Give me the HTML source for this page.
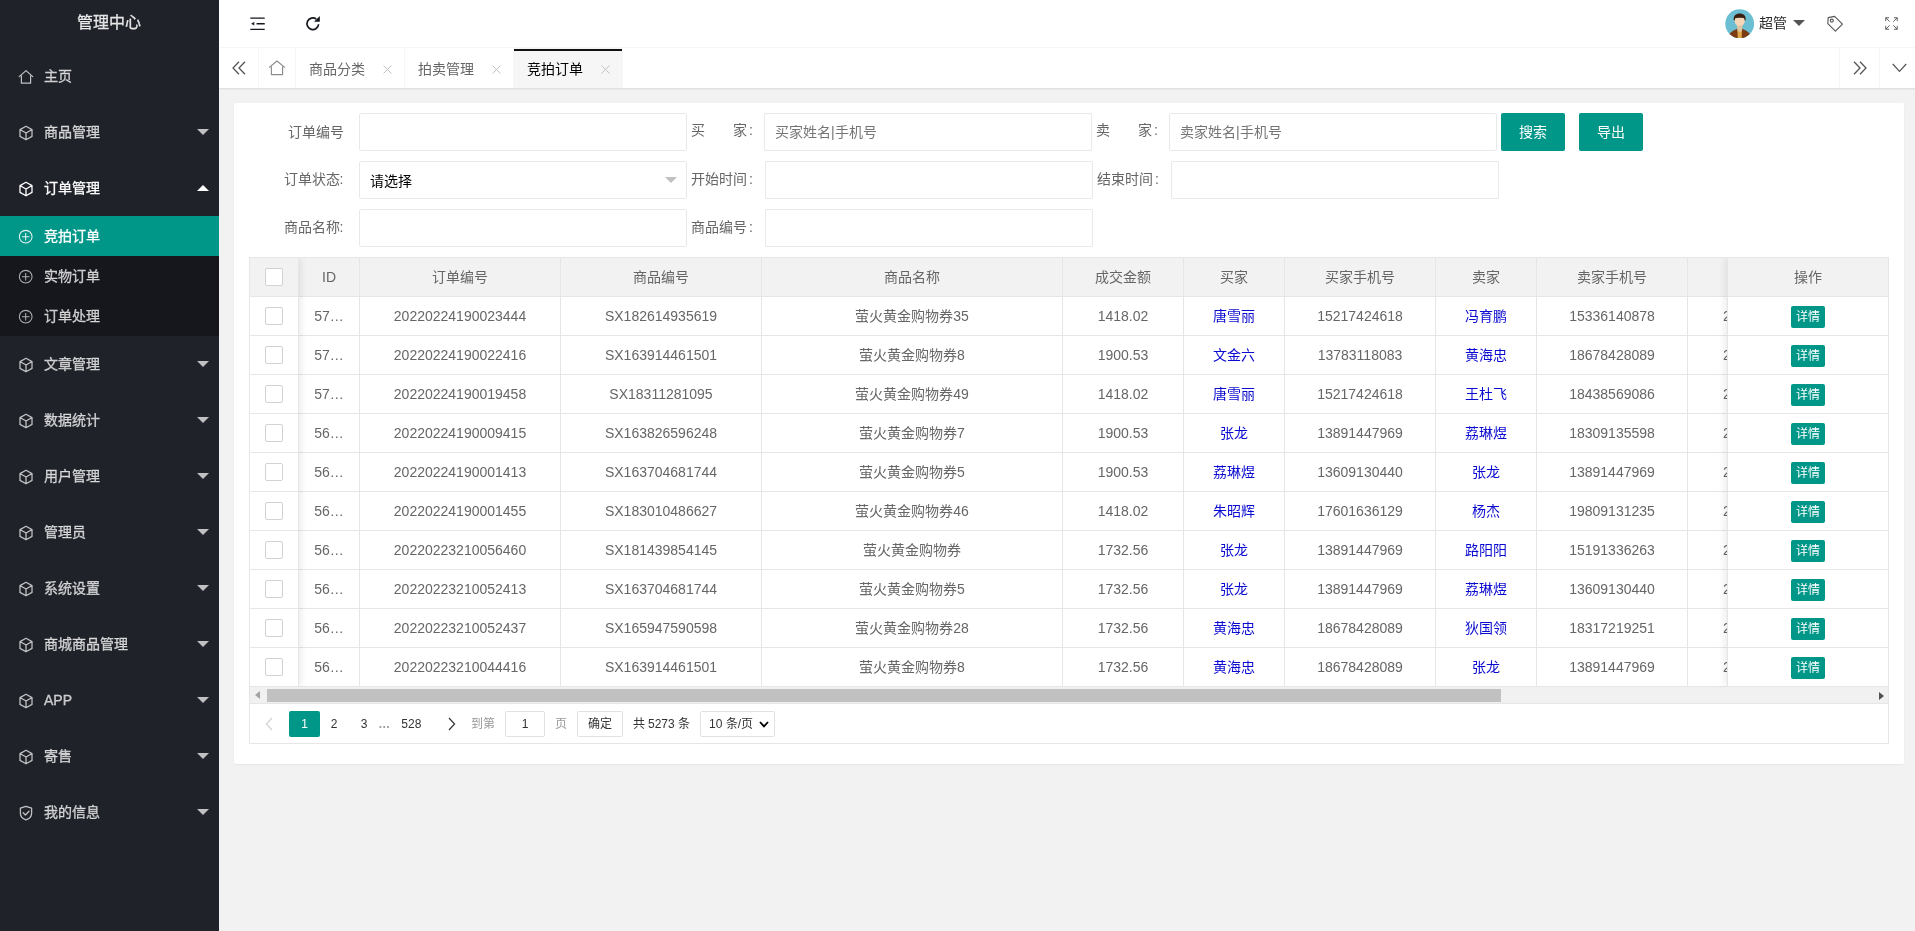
<!DOCTYPE html>
<html lang="zh-CN">
<head>
<meta charset="utf-8">
<title>管理中心</title>
<style>
*{box-sizing:border-box;margin:0;padding:0}
html,body{width:1915px;height:931px;overflow:hidden;background:#f2f2f2}
body{font-family:"Liberation Sans",sans-serif;font-size:14px;color:#666;line-height:24px;position:relative}
ul{list-style:none}
#page{will-change:transform;position:absolute;left:-1px;top:-2px;width:1920px;height:933px;overflow:hidden;background:#f2f2f2}
/* side */
#side{position:absolute;left:0;top:0;width:220px;height:933px;background:#20222a;color:rgba(255,255,255,.7);z-index:5;-webkit-text-stroke:0.3px}
#logo{height:50px;line-height:50px;text-align:center;font-size:16px;color:rgba(255,255,255,.85);padding-top:0}
.mi{position:relative;height:56px;line-height:56px;padding-left:45px;color:rgba(255,255,255,.72)}
.mi.open{color:#fff}
.mi .ico,.ci .ico{position:absolute;left:19px;top:20.7px;width:16px;height:16px}
.ci .ico{top:12.8px;left:19.4px;width:15.4px;height:15.4px;opacity:.9}
.arr{position:absolute;right:10px;top:25px;width:0;height:0;border:6px solid transparent;border-top-color:rgba(255,255,255,.72);border-bottom-width:0}
.arr.up{border:6px solid transparent;border-bottom-color:#fff;border-top-width:0;top:25px}
.sub{background:rgba(0,0,0,.3)}
.ci{position:relative;height:40px;line-height:40px;padding-left:45px;color:rgba(255,255,255,.72)}
.ci.act{background:#009688;color:#fff}
/* header */
#hd{position:absolute;left:220px;top:0;right:0;height:50px;background:#fff;border-bottom:1px solid #f6f6f6}
#hd svg{position:absolute}
#tabs{position:absolute;left:220px;top:50px;right:0;height:40px;background:#fff;box-shadow:0 1px 2px 0 rgba(0,0,0,.1)}
#tabs .t{position:absolute;top:0;height:40px;line-height:42px;border-right:1px solid #f6f6f6;color:#666;padding-left:13px}
#tabs .t.on{background:#f6f6f6;color:#000}
#tabs .t.on:before{content:"";position:absolute;left:0;right:0;top:1px;height:2px;background:#111}
#tabs svg{position:absolute}
.x{position:absolute;right:12.5px;top:17px;width:9px;height:9px}
/* card */
#card{position:absolute;left:235px;top:105px;width:1670px;height:661px;background:#fff;border-radius:2px;box-shadow:0 1px 2px 0 rgba(0,0,0,.05)}
.lb{position:absolute;height:38px;line-height:38px;color:#666;white-space:nowrap}
.lb.r{text-align:right}
.lb b{font-weight:400;margin-left:2px}
.lb.r b{margin-left:0}
.in{position:absolute;height:38px;border:1px solid #e9e9e9;border-radius:2px;background:#fff;line-height:36px;padding-left:10px;color:#757575;white-space:nowrap}
.bt{position:absolute;height:38px;line-height:38px;background:#009688;color:#fff;text-align:center;border-radius:2px}
/* table */
#tv{position:absolute;left:15px;top:154px;width:1640px;height:487px;border:1px solid #e6e6e6;overflow:hidden}
#tw{position:absolute;left:0;top:0;width:1638px;height:429px;overflow:hidden}
table{border-collapse:separate;border-spacing:0;table-layout:fixed;width:1639px}
#fr table{width:160px}
th,td{height:39px;border-bottom:1px solid #e6e6e6;border-right:1px solid #e6e6e6;text-align:center;font-size:14px;color:#666;font-weight:400;white-space:nowrap;overflow:hidden;padding:0;line-height:28px}
th{background:#f2f2f2}
td a{color:#0a0ad0}
.ck{display:inline-block;width:18px;height:18px;border:1px solid #d2d2d2;border-radius:2px;background:#fff;vertical-align:middle;position:relative;top:-1px}
.c0{width:49px}.c1{width:61px}.c2{width:201px}.c3{width:201px}.c4{width:301px}.c5{width:121px}.c6{width:101px}.c7{width:151px}.c8{width:101px}.c9{width:151px}.c10{width:201px}
#fl{position:absolute;left:0;top:0;width:49px;height:429px;box-shadow:1px 0 8px rgba(0,0,0,.1);pointer-events:none}
#fr{position:absolute;right:0;top:0;width:161px;height:429px;background:#fff;box-shadow:-1px 0 8px rgba(0,0,0,.1);border-left:1px solid #e6e6e6}
#fr td,#fr th{width:160px;border-right:none}
.btn-xs{display:inline-block;height:22px;line-height:22px;padding:0 5px;font-size:12px;background:#009688;color:#fff;border-radius:2px;vertical-align:middle}
#sb{position:absolute;left:0;top:429px;width:1638px;height:16px;background:#f1f1f1}
#sb .th{position:absolute;left:17px;top:2px;width:1234px;height:13px;background:#c1c1c1}
#sb .la{position:absolute;left:5px;top:4px;border:4.5px solid transparent;border-right:5px solid #a3a3a3;border-left-width:0}
#sb .ra{position:absolute;right:4.3px;top:4.6px;border:4.5px solid transparent;border-left:5px solid #505050;border-right-width:0}
#pg{position:absolute;left:0;top:445px;width:1638px;height:41px;border-top:1px solid #e6e6e6;font-size:12px;color:#333;background:#fff}
#pg>*{position:absolute;top:7px;height:26px;line-height:26px;text-align:center;white-space:nowrap}
</style>
</head>
<body>
<div id="page">
  <div id="side">
    <div id="logo">管理中心</div>
    <ul id="menu">
<li class="mi "><svg class="ico" viewBox="0 0 16 16"><path d="M1.2 7.6 L8 1.6 L14.8 7.6 M3.4 6.4 V14.2 H12.6 V6.4" fill="none" stroke="currentColor" stroke-width="1.2" stroke-linejoin="round" stroke-linecap="round"/></svg><span>主页</span></li>
<li class="mi "><svg class="ico" viewBox="0 0 16 16"><path d="M8 1.2 L14 4.6 V11.4 L8 14.8 L2 11.4 V4.6 Z M2.3 4.8 L8 8 L13.7 4.8 M8 8 V14.6" fill="none" stroke="currentColor" stroke-width="1.3" stroke-linejoin="round"/></svg><span>商品管理</span><i class="arr down"></i></li>
<li class="mi open"><svg class="ico" viewBox="0 0 16 16"><path d="M8 1.2 L14 4.6 V11.4 L8 14.8 L2 11.4 V4.6 Z M2.3 4.8 L8 8 L13.7 4.8 M8 8 V14.6" fill="none" stroke="currentColor" stroke-width="1.3" stroke-linejoin="round"/></svg><span>订单管理</span><i class="arr up"></i></li>
<ul class="sub"><li class="ci act"><svg class="ico" viewBox="0 0 16 16"><circle cx="8" cy="8" r="6.6" fill="none" stroke="currentColor" stroke-width="1.1"/><path d="M8 4.1 V11.9 M4.1 8 H11.9" stroke="currentColor" stroke-width="1.1" fill="none"/></svg><span>竞拍订单</span></li><li class="ci "><svg class="ico" viewBox="0 0 16 16"><circle cx="8" cy="8" r="6.6" fill="none" stroke="currentColor" stroke-width="1.1"/><path d="M8 4.1 V11.9 M4.1 8 H11.9" stroke="currentColor" stroke-width="1.1" fill="none"/></svg><span>实物订单</span></li><li class="ci "><svg class="ico" viewBox="0 0 16 16"><circle cx="8" cy="8" r="6.6" fill="none" stroke="currentColor" stroke-width="1.1"/><path d="M8 4.1 V11.9 M4.1 8 H11.9" stroke="currentColor" stroke-width="1.1" fill="none"/></svg><span>订单处理</span></li></ul>
<li class="mi "><svg class="ico" viewBox="0 0 16 16"><path d="M8 1.2 L14 4.6 V11.4 L8 14.8 L2 11.4 V4.6 Z M2.3 4.8 L8 8 L13.7 4.8 M8 8 V14.6" fill="none" stroke="currentColor" stroke-width="1.3" stroke-linejoin="round"/></svg><span>文章管理</span><i class="arr down"></i></li>
<li class="mi "><svg class="ico" viewBox="0 0 16 16"><path d="M8 1.2 L14 4.6 V11.4 L8 14.8 L2 11.4 V4.6 Z M2.3 4.8 L8 8 L13.7 4.8 M8 8 V14.6" fill="none" stroke="currentColor" stroke-width="1.3" stroke-linejoin="round"/></svg><span>数据统计</span><i class="arr down"></i></li>
<li class="mi "><svg class="ico" viewBox="0 0 16 16"><path d="M8 1.2 L14 4.6 V11.4 L8 14.8 L2 11.4 V4.6 Z M2.3 4.8 L8 8 L13.7 4.8 M8 8 V14.6" fill="none" stroke="currentColor" stroke-width="1.3" stroke-linejoin="round"/></svg><span>用户管理</span><i class="arr down"></i></li>
<li class="mi "><svg class="ico" viewBox="0 0 16 16"><path d="M8 1.2 L14 4.6 V11.4 L8 14.8 L2 11.4 V4.6 Z M2.3 4.8 L8 8 L13.7 4.8 M8 8 V14.6" fill="none" stroke="currentColor" stroke-width="1.3" stroke-linejoin="round"/></svg><span>管理员</span><i class="arr down"></i></li>
<li class="mi "><svg class="ico" viewBox="0 0 16 16"><path d="M8 1.2 L14 4.6 V11.4 L8 14.8 L2 11.4 V4.6 Z M2.3 4.8 L8 8 L13.7 4.8 M8 8 V14.6" fill="none" stroke="currentColor" stroke-width="1.3" stroke-linejoin="round"/></svg><span>系统设置</span><i class="arr down"></i></li>
<li class="mi "><svg class="ico" viewBox="0 0 16 16"><path d="M8 1.2 L14 4.6 V11.4 L8 14.8 L2 11.4 V4.6 Z M2.3 4.8 L8 8 L13.7 4.8 M8 8 V14.6" fill="none" stroke="currentColor" stroke-width="1.3" stroke-linejoin="round"/></svg><span>商城商品管理</span><i class="arr down"></i></li>
<li class="mi "><svg class="ico" viewBox="0 0 16 16"><path d="M8 1.2 L14 4.6 V11.4 L8 14.8 L2 11.4 V4.6 Z M2.3 4.8 L8 8 L13.7 4.8 M8 8 V14.6" fill="none" stroke="currentColor" stroke-width="1.3" stroke-linejoin="round"/></svg><span>APP</span><i class="arr down"></i></li>
<li class="mi "><svg class="ico" viewBox="0 0 16 16"><path d="M8 1.2 L14 4.6 V11.4 L8 14.8 L2 11.4 V4.6 Z M2.3 4.8 L8 8 L13.7 4.8 M8 8 V14.6" fill="none" stroke="currentColor" stroke-width="1.3" stroke-linejoin="round"/></svg><span>寄售</span><i class="arr down"></i></li>
<li class="mi "><svg class="ico" viewBox="0 0 16 16"><path d="M8 1.3 L13.6 3.2 V8.2 C13.6 11.4 11 13.8 8 14.8 C5 13.8 2.4 11.4 2.4 8.2 V3.2 Z M5.2 7.8 L7.4 10 L11 6.2" fill="none" stroke="currentColor" stroke-width="1.3" stroke-linejoin="round" stroke-linecap="round"/></svg><span>我的信息</span><i class="arr down"></i></li>
    </ul>
  </div>

  <div id="hd">
    <!-- shrink -->
    <svg style="left:30.5px;top:19.2px" width="15" height="13.4" viewBox="0 0 16 14"><path d="M0.3 1 H15.7 M7 7 H15.7 M0.3 13 H15.7" stroke="#14161d" stroke-width="1.45" fill="none"/><path d="M1.2 7 L4.6 5 V9 Z" fill="#1e2028"/></svg>
    <!-- refresh -->
    <svg style="left:86px;top:17.3px" width="16" height="16" viewBox="0 0 16 16"><path d="M13.6 9.2 A5.8 5.8 0 1 1 11.2 4" stroke="#14161d" stroke-width="1.7" fill="none"/><path d="M14.8 1 V6.8 H9 Z" fill="#14161d"/></svg>
    <!-- avatar -->
    <svg style="left:1506.3px;top:11.4px" width="29.4" height="29.4" viewBox="0 0 30 30"><defs><clipPath id="av"><circle cx="15" cy="15" r="14.7"/></clipPath></defs><g clip-path="url(#av)"><rect width="30" height="30" fill="#6cbfd2"/><path d="M4 26 C6.5 23 10 21.2 12.2 20.2 L17.8 20.2 C20 21.2 23.5 23 26 26 L26 30 L4 30 Z" fill="#7b3c15"/><path d="M12.7 21.6 L17.3 21.6 L17 30 L13 30 Z" fill="#dfa94a"/><path d="M12 16 L18 16 L17.4 22.2 L15 23.4 L12.6 22.2 Z" fill="#dcc5a3"/><path d="M9.9 9 L20.1 9 L20.1 12.4 C20.1 15.4 17.4 17.2 15 17.2 C12.6 17.2 9.9 15.4 9.9 12.4 Z" fill="#f7d6b8"/><path d="M9 11.6 C8.2 7 11 4.6 15 4.6 C19 4.6 21.8 7 21 11.6 L19.9 11.6 L19.7 9.6 C18 8.8 12 8.8 10.3 9.6 L10.1 11.6 Z" fill="#3b1e0e"/></g></svg>
    <div style="position:absolute;left:1540px;top:13px;line-height:24px;color:#2b2b2b;font-size:14px">超管</div>
    <i style="position:absolute;left:1573.6px;top:21.8px;border:6px solid transparent;border-top:6.4px solid #555;border-bottom-width:0"></i>
    <!-- tag -->
    <svg style="left:1607px;top:17px" width="18" height="18" viewBox="0 0 18 18"><path d="M2.2 2.6 L8.6 1.4 L16.4 9.2 L9.4 16.2 L1.8 8.6 Z" stroke="#555" stroke-width="1.1" fill="none" stroke-linejoin="round"/><circle cx="5.8" cy="5.6" r="1.5" stroke="#555" stroke-width="1.1" fill="none"/></svg>
    <!-- fullscreen -->
    <svg style="left:1665.5px;top:19px" width="13" height="13" viewBox="0 0 14 14"><path d="M0.8 4.4 V0.8 H4.4 M0.8 0.8 L5 5 M9.6 0.8 H13.2 V4.4 M13.2 0.8 L9 5 M13.2 9.6 V13.2 H9.6 M13.2 13.2 L9 9 M4.4 13.2 H0.8 V9.6 M0.8 13.2 L5 9" stroke="#555" stroke-width="1" fill="none"/></svg>
  </div>

  <div id="tabs">
    <div class="t" style="left:0;width:40px"><svg style="left:12.6px;top:13px" width="15" height="14" viewBox="0 0 15 14"><path d="M7 0.8 L1 7 L7 13.2 M13 0.8 L7 7 L13 13.2" stroke="#555" stroke-width="1.3" fill="none"/></svg></div>
    <div class="t" style="left:40px;width:37px"><svg style="left:9px;top:12px" width="18" height="16" viewBox="0 0 18 16"><path d="M1 7.6 L9 1 L17 7.6 M3.4 6.6 V14.6 H14.6 V6.6" fill="none" stroke="#8c8c8c" stroke-width="1.15" stroke-linejoin="round"/></svg></div>
    <div class="t" style="left:77px;width:109px">商品分类<svg class="x" viewBox="0 0 9 9"><path d="M0.5 0.5 L8.5 8.5 M8.5 0.5 L0.5 8.5" stroke="#c2c2c2" stroke-width="1"/></svg></div>
    <div class="t" style="left:186px;width:109px">拍卖管理<svg class="x" viewBox="0 0 9 9"><path d="M0.5 0.5 L8.5 8.5 M8.5 0.5 L0.5 8.5" stroke="#c2c2c2" stroke-width="1"/></svg></div>
    <div class="t on" style="left:295px;width:109px">竞拍订单<svg class="x" viewBox="0 0 9 9"><path d="M0.5 0.5 L8.5 8.5 M8.5 0.5 L0.5 8.5" stroke="#c2c2c2" stroke-width="1"/></svg></div>
    <div class="t" style="left:1620px;width:41px;border-left:1px solid #f6f6f6"><svg style="left:12px;top:13px" width="15" height="14" viewBox="0 0 15 14"><path d="M2 0.8 L8 7 L2 13.2 M8 0.8 L14 7 L8 13.2" stroke="#555" stroke-width="1.3" fill="none"/></svg></div>
    <div class="t" style="left:1661px;width:40px;border-right:none"><svg style="left:12px;top:15px" width="15" height="10" viewBox="0 0 15 10"><path d="M0.8 1 L7.5 8.4 L14.2 1" stroke="#555" stroke-width="1.2" fill="none"/></svg></div>
  </div>

  <div id="card">
    <div class="lb r" style="left:15px;top:10px;width:95px">订单编号</div>
    <div class="in" style="left:125px;top:10px;width:328px"></div>
    <div class="lb" style="left:457px;top:8px">买&emsp;&emsp;家<b>:</b></div>
    <div class="in" style="left:530px;top:10px;width:328px">买家姓名|手机号</div>
    <div class="lb" style="left:862px;top:8px">卖&emsp;&emsp;家<b>:</b></div>
    <div class="in" style="left:935px;top:10px;width:328px">卖家姓名|手机号</div>
    <div class="bt" style="left:1267px;top:10px;width:64px">搜索</div>
    <div class="bt" style="left:1345px;top:10px;width:64px">导出</div>

    <div class="lb r" style="left:15px;top:57px;width:94.5px">订单状态<b>:</b></div>
    <div class="in" style="left:125px;top:58px;width:328px;color:#000;line-height:38px">请选择<i style="position:absolute;right:9.5px;top:15px;border:6px solid transparent;border-top-color:#c0c0c0;border-bottom-width:0"></i></div>
    <div class="lb" style="left:457px;top:57px">开始时间<b>:</b></div>
    <div class="in" style="left:531px;top:58px;width:328px"></div>
    <div class="lb" style="left:863px;top:57px">结束时间<b>:</b></div>
    <div class="in" style="left:937px;top:58px;width:328px"></div>

    <div class="lb r" style="left:15px;top:105px;width:94.5px">商品名称<b>:</b></div>
    <div class="in" style="left:125px;top:106px;width:328px"></div>
    <div class="lb" style="left:457px;top:105px">商品编号<b>:</b></div>
    <div class="in" style="left:531px;top:106px;width:328px"></div>

    <div id="tv">
      <div id="tw">
        <table>
          <thead><tr><th class="c0"><span class="ck"></span></th><th class="c1">ID</th><th class="c2">订单编号</th><th class="c3">商品编号</th><th class="c4">商品名称</th><th class="c5">成交金额</th><th class="c6">买家</th><th class="c7">买家手机号</th><th class="c8">卖家</th><th class="c9">卖家手机号</th><th class="c10">成交时间</th></tr></thead>
          <tbody>
<tr><td class="c0"><span class="ck"></span></td><td class="c1">57…</td><td class="c2">20220224190023444</td><td class="c3">SX182614935619</td><td class="c4">萤火黄金购物券35</td><td class="c5">1418.02</td><td class="c6"><a>唐雪丽</a></td><td class="c7">15217424618</td><td class="c8"><a>冯育鹏</a></td><td class="c9">15336140878</td><td class="c10"><div>2022-02-24 19:00:23</div></td></tr>
<tr><td class="c0"><span class="ck"></span></td><td class="c1">57…</td><td class="c2">20220224190022416</td><td class="c3">SX163914461501</td><td class="c4">萤火黄金购物券8</td><td class="c5">1900.53</td><td class="c6"><a>文金六</a></td><td class="c7">13783118083</td><td class="c8"><a>黄海忠</a></td><td class="c9">18678428089</td><td class="c10"><div>2022-02-24 19:00:22</div></td></tr>
<tr><td class="c0"><span class="ck"></span></td><td class="c1">57…</td><td class="c2">20220224190019458</td><td class="c3">SX18311281095</td><td class="c4">萤火黄金购物券49</td><td class="c5">1418.02</td><td class="c6"><a>唐雪丽</a></td><td class="c7">15217424618</td><td class="c8"><a>王杜飞</a></td><td class="c9">18438569086</td><td class="c10"><div>2022-02-24 19:00:19</div></td></tr>
<tr><td class="c0"><span class="ck"></span></td><td class="c1">56…</td><td class="c2">20220224190009415</td><td class="c3">SX163826596248</td><td class="c4">萤火黄金购物券7</td><td class="c5">1900.53</td><td class="c6"><a>张龙</a></td><td class="c7">13891447969</td><td class="c8"><a>荔琳煜</a></td><td class="c9">18309135598</td><td class="c10"><div>2022-02-24 19:00:09</div></td></tr>
<tr><td class="c0"><span class="ck"></span></td><td class="c1">56…</td><td class="c2">20220224190001413</td><td class="c3">SX163704681744</td><td class="c4">萤火黄金购物券5</td><td class="c5">1900.53</td><td class="c6"><a>荔琳煜</a></td><td class="c7">13609130440</td><td class="c8"><a>张龙</a></td><td class="c9">13891447969</td><td class="c10"><div>2022-02-24 19:00:01</div></td></tr>
<tr><td class="c0"><span class="ck"></span></td><td class="c1">56…</td><td class="c2">20220224190001455</td><td class="c3">SX183010486627</td><td class="c4">萤火黄金购物券46</td><td class="c5">1418.02</td><td class="c6"><a>朱昭辉</a></td><td class="c7">17601636129</td><td class="c8"><a>杨杰</a></td><td class="c9">19809131235</td><td class="c10"><div>2022-02-24 19:00:01</div></td></tr>
<tr><td class="c0"><span class="ck"></span></td><td class="c1">56…</td><td class="c2">20220223210056460</td><td class="c3">SX181439854145</td><td class="c4">萤火黄金购物券</td><td class="c5">1732.56</td><td class="c6"><a>张龙</a></td><td class="c7">13891447969</td><td class="c8"><a>路阳阳</a></td><td class="c9">15191336263</td><td class="c10"><div>2022-02-23 21:00:56</div></td></tr>
<tr><td class="c0"><span class="ck"></span></td><td class="c1">56…</td><td class="c2">20220223210052413</td><td class="c3">SX163704681744</td><td class="c4">萤火黄金购物券5</td><td class="c5">1732.56</td><td class="c6"><a>张龙</a></td><td class="c7">13891447969</td><td class="c8"><a>荔琳煜</a></td><td class="c9">13609130440</td><td class="c10"><div>2022-02-23 21:00:52</div></td></tr>
<tr><td class="c0"><span class="ck"></span></td><td class="c1">56…</td><td class="c2">20220223210052437</td><td class="c3">SX165947590598</td><td class="c4">萤火黄金购物券28</td><td class="c5">1732.56</td><td class="c6"><a>黄海忠</a></td><td class="c7">18678428089</td><td class="c8"><a>狄国领</a></td><td class="c9">18317219251</td><td class="c10"><div>2022-02-23 21:00:52</div></td></tr>
<tr><td class="c0"><span class="ck"></span></td><td class="c1">56…</td><td class="c2">20220223210044416</td><td class="c3">SX163914461501</td><td class="c4">萤火黄金购物券8</td><td class="c5">1732.56</td><td class="c6"><a>黄海忠</a></td><td class="c7">18678428089</td><td class="c8"><a>张龙</a></td><td class="c9">13891447969</td><td class="c10"><div>2022-02-23 21:00:44</div></td></tr>
          </tbody>
        </table>
      </div>
      <div id="fl"></div>
      <div id="fr">
        <table>
          <thead><tr><th>操作</th></tr></thead>
          <tbody>
<tr><td><span class="btn-xs">详情</span></td></tr>
<tr><td><span class="btn-xs">详情</span></td></tr>
<tr><td><span class="btn-xs">详情</span></td></tr>
<tr><td><span class="btn-xs">详情</span></td></tr>
<tr><td><span class="btn-xs">详情</span></td></tr>
<tr><td><span class="btn-xs">详情</span></td></tr>
<tr><td><span class="btn-xs">详情</span></td></tr>
<tr><td><span class="btn-xs">详情</span></td></tr>
<tr><td><span class="btn-xs">详情</span></td></tr>
<tr><td><span class="btn-xs">详情</span></td></tr>
          </tbody>
        </table>
      </div>
      <div id="sb"><i class="la"></i><div class="th"></div><i class="ra"></i></div>
      <div id="pg">
        <svg style="left:15px;top:13px;width:8px;height:14px" viewBox="0 0 8 14"><path d="M7 1 L1.4 7 L7 13" stroke="#d2d2d2" stroke-width="1.2" fill="none"/></svg>
        <span style="left:39px;width:31px;background:#009688;color:#fff;border-radius:2px">1</span>
        <span style="left:68.5px;width:31px">2</span>
        <span style="left:98.5px;width:31px">3</span>
        <span style="left:128.3px;width:12px;color:#999;font-weight:700">…</span>
        <span style="left:139.3px;width:44px">528</span>
        <svg style="left:198px;top:13px;width:8px;height:14px" viewBox="0 0 8 14"><path d="M1 1 L6.6 7 L1 13" stroke="#333" stroke-width="1.2" fill="none"/></svg>
        <span style="left:221px;color:#999">到第</span>
        <span style="left:255px;width:40px;border:1px solid #e2e2e2;border-radius:2px;line-height:24px">1</span>
        <span style="left:305px;color:#999">页</span>
        <span style="left:327px;width:46px;border:1px solid #e2e2e2;border-radius:2px;line-height:24px">确定</span>
        <span style="left:382.7px">共 5273 条</span>
        <span style="left:450px;width:75px;border:1px solid #e2e2e2;border-radius:2px;line-height:24px;text-align:left;padding-left:8px">10 条/页<svg style="position:absolute;right:5px;top:9px" width="10" height="7" viewBox="0 0 10 7"><path d="M1 1 L5 5.4 L9 1" stroke="#000" stroke-width="1.8" fill="none"/></svg></span>
      </div>
    </div>
  </div>
</div>
</body>
</html>
